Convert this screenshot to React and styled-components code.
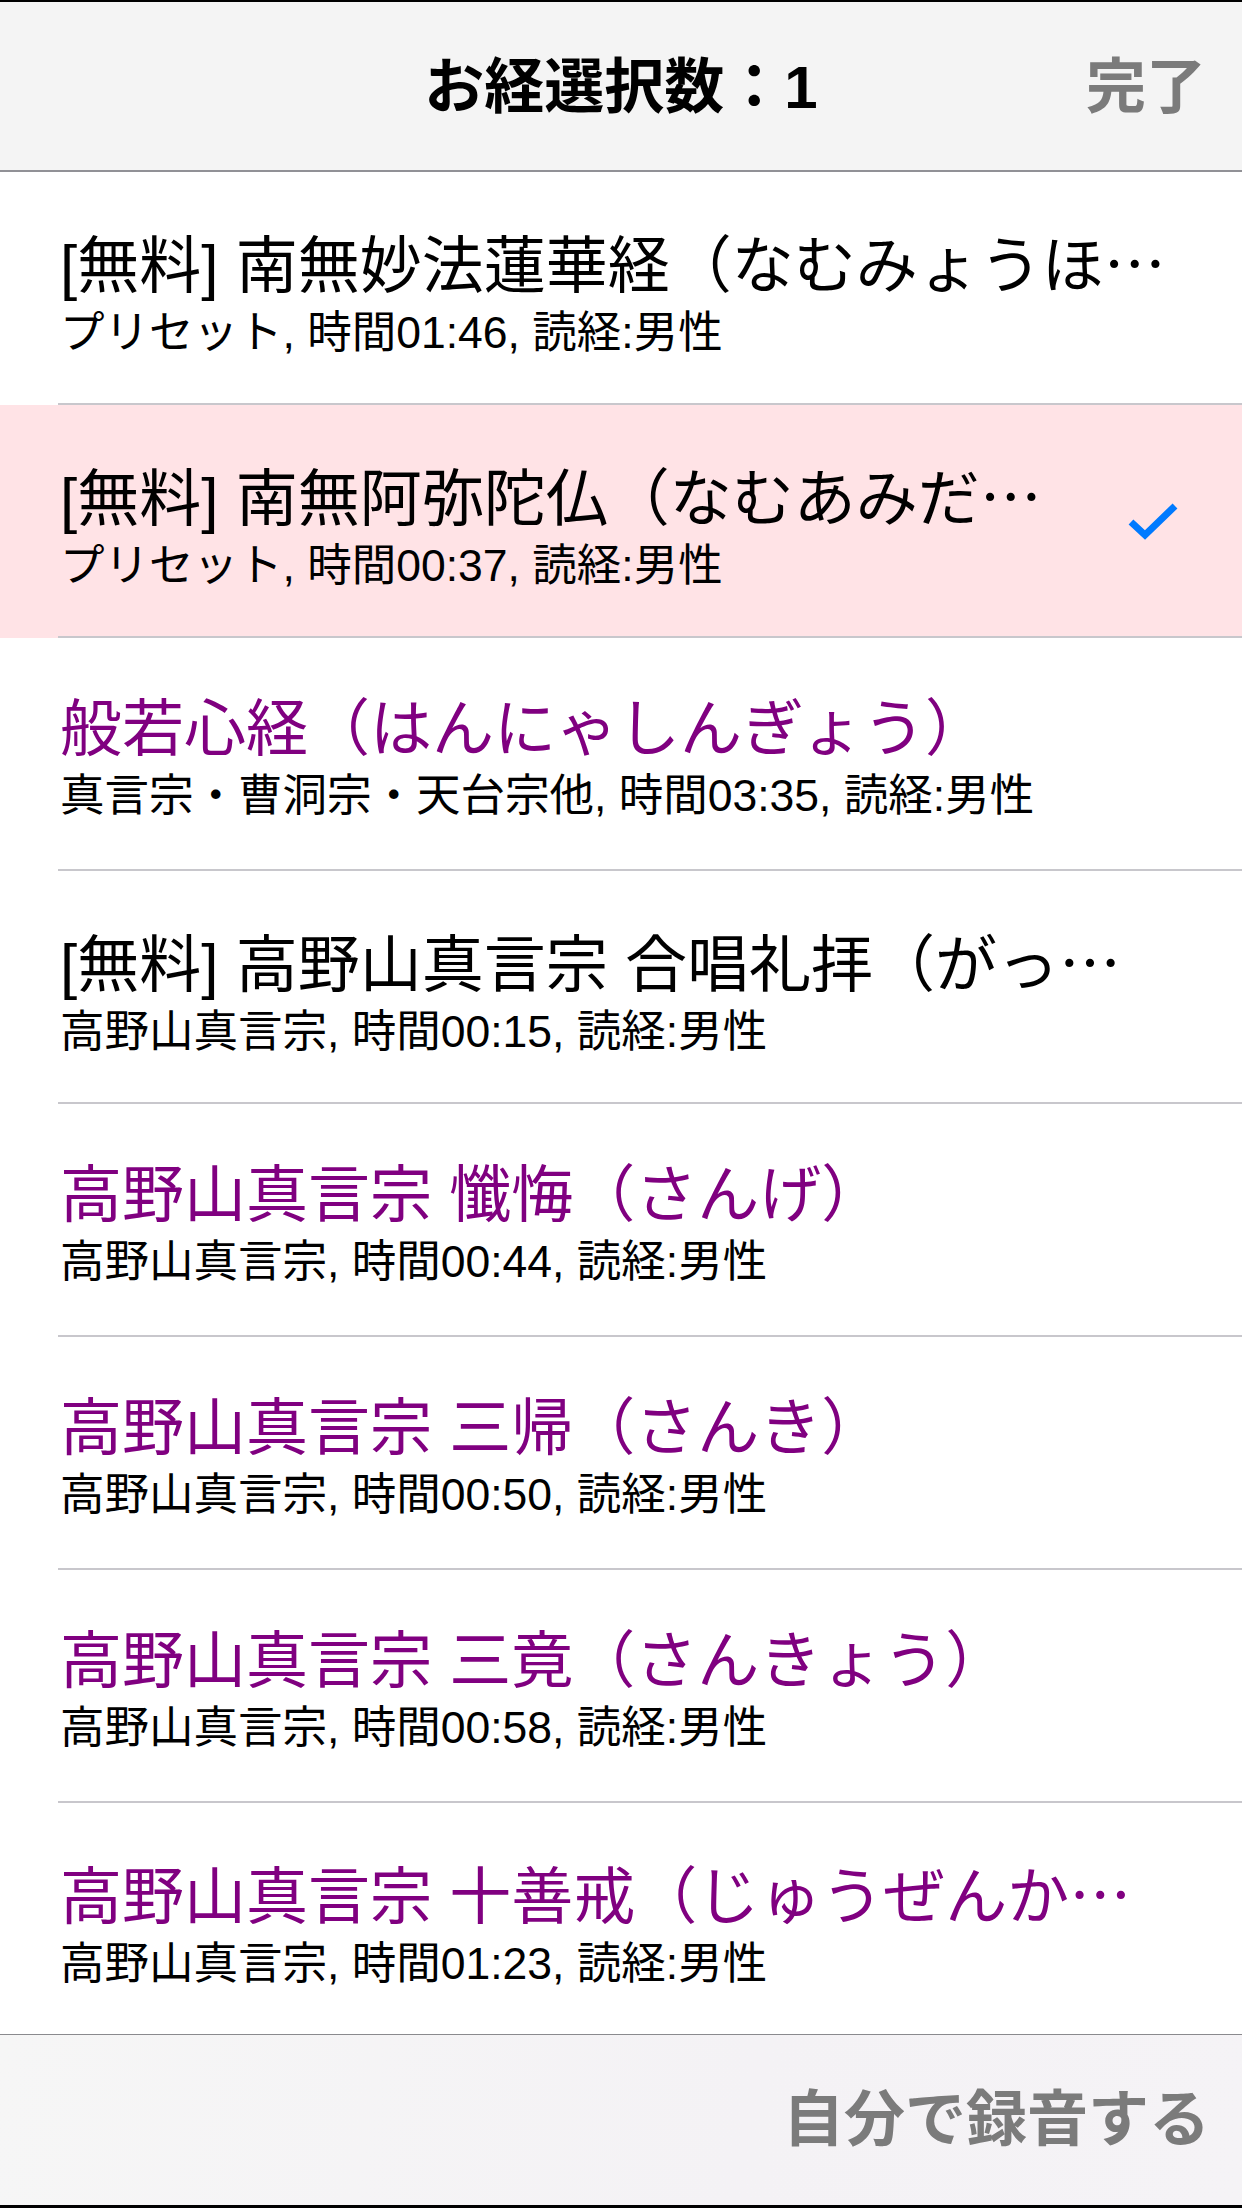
import React from "react";
import styled, { createGlobalStyle } from "styled-components";

const GlobalStyle = createGlobalStyle`
  html, body {
    margin: 0;
    padding: 0;
    background: #000;
  }
  * { box-sizing: border-box; }
`;

const FONT = `"Liberation Sans", "Noto Sans CJK JP", sans-serif`;

const Screen = styled.div`
  width: 1242px;
  height: 2208px;
  display: flex;
  flex-direction: column;
  background: #fff;
  border-top: 2px solid #000;
  border-bottom: 3px solid #000;
  font-family: ${FONT};
  overflow: hidden;
`;

const NavBar = styled.header`
  flex-shrink: 0;
  height: 170px;
  background: #f4f4f4;
  border-bottom: 2px solid #919196;
  display: grid;
  grid-template-columns: 1fr auto 1fr;
  align-items: center;
  padding: 4px 36px 0 36px;
`;

const NavTitle = styled.h1`
  grid-column: 2;
  margin: 0;
  font-size: 60px;
  line-height: 60px;
  font-weight: 700;
  color: #000;
  white-space: nowrap;
`;

const BarButton = styled.span`
  font-size: ${(p) => p.$size || 60}px;
  line-height: 60px;
  font-weight: 700;
  color: #7b7b7b;
  white-space: nowrap;
`;

const NavDone = styled(BarButton)`
  grid-column: 3;
  justify-self: end;
`;

const List = styled.ul`
  flex: 1;
  min-height: 0;
  margin: 0;
  padding: 0;
  list-style: none;
  overflow: hidden;
`;

const Row = styled.li`
  height: 233px;
  display: flex;
  padding-left: 58px;
  background: ${(p) => (p.$selected ? "#ffe3e6" : "#fff")};
`;

const Cell = styled.div`
  flex: 1;
  min-width: 0;
  display: flex;
  align-items: center;
  padding: 0 63px 0 2px;
  border-bottom: 2px solid #c8c7cc;
`;

const TextCol = styled.div`
  flex: 1;
  min-width: 0;
  padding-top: 9px;
`;

const Title = styled.div`
  font-size: 62px;
  line-height: 76px;
  color: ${(p) => (p.$purple ? "#800080" : "#000")};
  white-space: nowrap;
`;

const Ellipsis = styled.span`
  font-family: "Noto Sans CJK JP", sans-serif;
`;

const Sub = styled.div`
  font-size: 44.5px;
  line-height: 56px;
  color: #000;
  white-space: nowrap;
`;

const Check = styled.svg`
  flex-shrink: 0;
  width: 52px;
  height: 40px;
  display: block;
`;

const ToolBar = styled.footer`
  flex-shrink: 0;
  height: 171px;
  background: linear-gradient(100deg, #f6f6f6 0%, #f4f2f5 60%, #f5f3f6 100%);
  border-top: 1px solid #8a8a8e;
  display: flex;
  align-items: center;
  justify-content: flex-end;
  padding: 0 32px 0 0;
`;

const items = [
  {
    title: "[無料] 南無妙法蓮華経（なむみょうほ",
    cut: true,
    sub: "プリセット, 時間01:46, 読経:男性",
  },
  {
    title: "[無料] 南無阿弥陀仏（なむあみだ",
    cut: true,
    sub: "プリセット, 時間00:37, 読経:男性",
    selected: true,
  },
  {
    title: "般若心経（はんにゃしんぎょう）",
    purple: true,
    sub: "真言宗・曹洞宗・天台宗他, 時間03:35, 読経:男性",
  },
  {
    title: "[無料] 高野山真言宗 合唱礼拝（がっ",
    cut: true,
    sub: "高野山真言宗, 時間00:15, 読経:男性",
  },
  {
    title: "高野山真言宗 懺悔（さんげ）",
    purple: true,
    sub: "高野山真言宗, 時間00:44, 読経:男性",
  },
  {
    title: "高野山真言宗 三帰（さんき）",
    purple: true,
    sub: "高野山真言宗, 時間00:50, 読経:男性",
  },
  {
    title: "高野山真言宗 三竟（さんきょう）",
    purple: true,
    sub: "高野山真言宗, 時間00:58, 読経:男性",
  },
  {
    title: "高野山真言宗 十善戒（じゅうぜんか",
    purple: true,
    cut: true,
    sub: "高野山真言宗, 時間01:23, 読経:男性",
  },
];

function CheckMark() {
  return (
    <Check viewBox="0 0 52 40" aria-hidden="true">
      <polyline
        points="4,21 18,34 48,5"
        fill="none"
        stroke="#007aff"
        strokeWidth="7"
        strokeLinejoin="miter"
      />
    </Check>
  );
}

export default function App() {
  return (
    <>
      <GlobalStyle />
      <Screen>
        <NavBar>
          <NavTitle>お経選択数：1</NavTitle>
          <NavDone>完了</NavDone>
        </NavBar>
        <List>
          {items.map((it, i) => (
            <Row key={i} $selected={it.selected}>
              <Cell>
                <TextCol>
                  <Title $purple={it.purple}>
                    {it.title}
                    {it.cut && <Ellipsis>…</Ellipsis>}
                  </Title>
                  <Sub>{it.sub}</Sub>
                </TextCol>
                {it.selected && <CheckMark />}
              </Cell>
            </Row>
          ))}
        </List>
        <ToolBar>
          <BarButton $size={61}>自分で録音する</BarButton>
        </ToolBar>
      </Screen>
    </>
  );
}
